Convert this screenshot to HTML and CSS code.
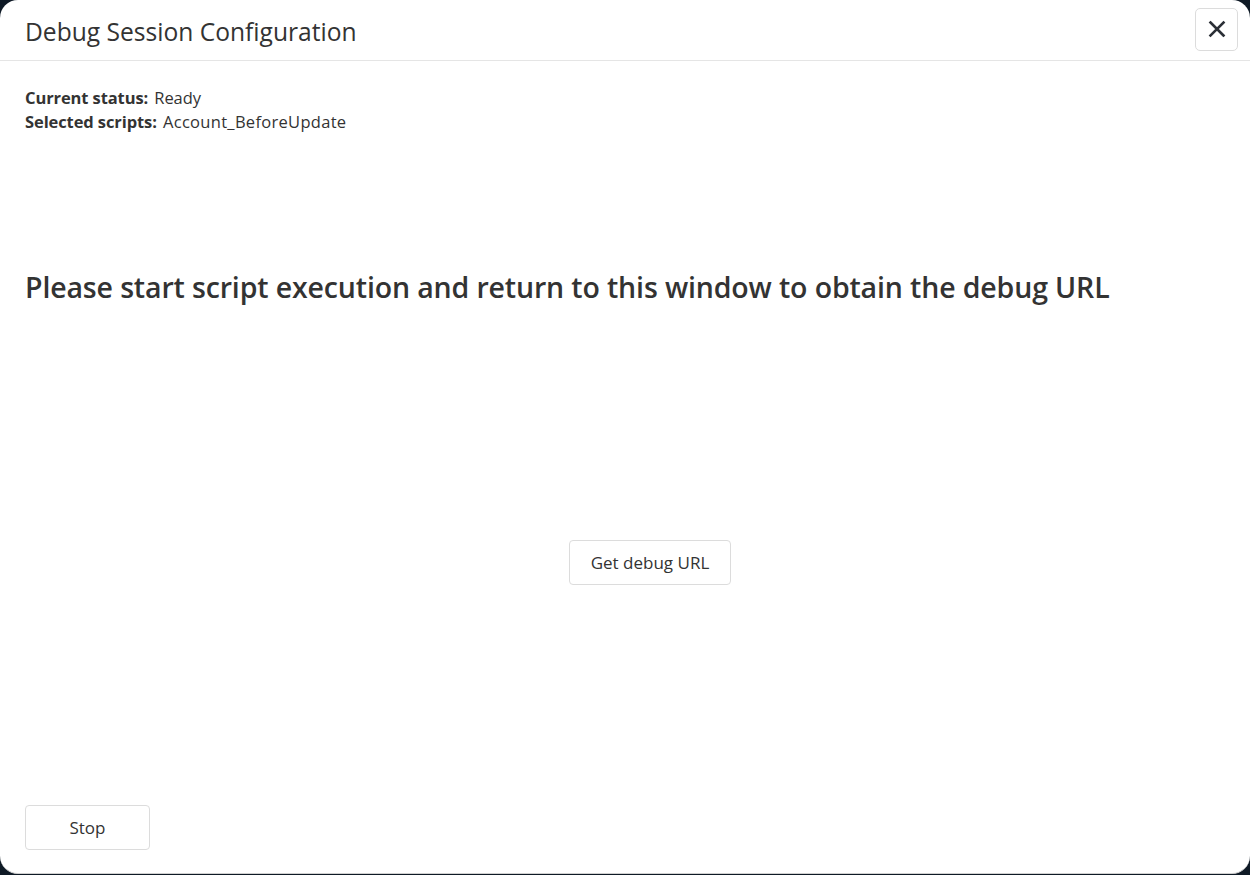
FILE: index.html
```html
<!DOCTYPE html>
<html>
<head>
<meta charset="utf-8">
<link rel="stylesheet" href="styles.css">
</head>
<body>
<div class="modal">
  <div class="modal-header">
    <h1 class="modal-title">Debug Session Configuration</h1>
    <button class="close-btn" aria-label="Close">
      <svg width="18" height="18" viewBox="0 0 18 18"><path d="M2.5 2.5 L15.5 15.5 M15.5 2.5 L2.5 15.5" stroke="#2b2f36" stroke-width="2.6" stroke-linecap="square"/></svg>
    </button>
  </div>
  <div class="modal-body">
    <div class="info">
      <div class="info-row"><span class="label">Current status:</span> Ready</div>
      <div class="info-row"><span class="label">Selected scripts:</span> <span class="info-value-long">Account_BeforeUpdate</span></div>
    </div>
    <h2 class="prompt">Please start script execution and return to this window to obtain the debug URL</h2>
    <div class="action">
      <button class="btn btn-get">Get debug URL</button>
    </div>
    <div class="footer">
      <button class="btn btn-stop">Stop</button>
    </div>
  </div>
</div>
</body>
</html>
```

FILE: styles.css
```css
html, body {
  margin: 0;
  padding: 0;
  width: 1250px;
  height: 875px;
  overflow: hidden;
  background: #0f1a26;
  font-family: "Open Sans", "Noto Sans", "Liberation Sans", sans-serif;
  color: #333;
}
.modal {
  box-sizing: border-box;
  width: 1250px;
  height: 874px;
  background: #fff;
  border-radius: 18px;
  display: flex;
  flex-direction: column;
  border-bottom: 1px solid #d0d0d0;
}
.modal-header {
  height: 61px;
  box-sizing: border-box;
  border-bottom: 1px solid #e5e5e5;
  display: flex;
  align-items: center;
  justify-content: space-between;
  padding: 0 12px 0 25px;
}
.modal-title {
  margin: 0;
  font-size: 24.6px;
  font-weight: 400;
  color: #333;
  letter-spacing: 0;
  padding-top: 2px;
}
.close-btn {
  width: 43px;
  height: 43px;
  margin-top: -2px;
  border: 1px solid #dcdcdc;
  border-radius: 5px;
  background: #fff;
  display: flex;
  align-items: center;
  justify-content: center;
  padding: 0;
}
.modal-body {
  flex: 1;
  display: flex;
  flex-direction: column;
  padding: 25px 25px 23px 25px;
}
.info {
  font-size: 16.5px;
  line-height: 24px;
  letter-spacing: -0.1px;
}
.info-value-long {
  letter-spacing: 0.3px;
}
.label {
  font-weight: 700;
  color: #333;
  margin-right: 2px;
}
.prompt {
  margin: 135px 0 0 0;
  font-size: 28.5px;
  font-weight: 600;
  color: #333;
  letter-spacing: -0.14px;
  line-height: 36px;
}
.action {
  display: flex;
  justify-content: center;
  margin-top: 235px;
  padding-left: 50px;
}
.btn {
  height: 45px;
  box-sizing: border-box;
  background: #fff;
  border: 1px solid #dcdcdc;
  border-radius: 4px;
  font-family: inherit;
  font-size: 17px;
  color: #333;
  letter-spacing: 0;
  cursor: pointer;
}
.btn-get {
  width: 162px;
}
.footer {
  margin-top: auto;
}
.btn-stop {
  width: 125px;
}
```
